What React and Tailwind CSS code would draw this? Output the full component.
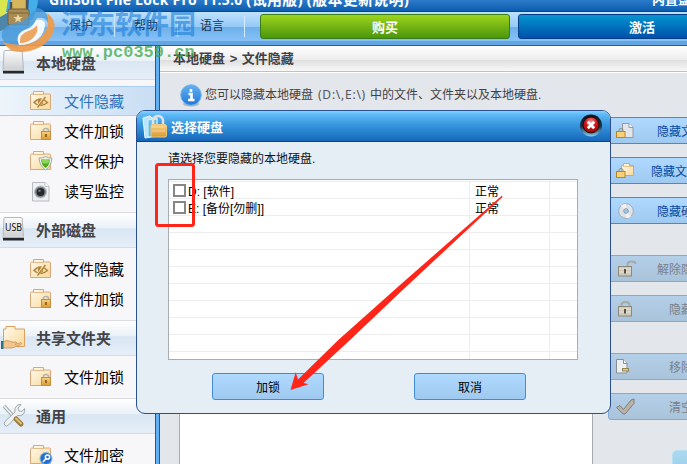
import React from "react";

const FOLDER = "M.5 4.500q0-1.500 1.500-1.500h1.500V.5h10V3h6q1 0 1 1V18.500H.5z";

function Defs() {
  return (
    <svg className="absolute h-0 w-0" aria-hidden="true">
      <defs>
        <linearGradient id="fold" x1="0" y1="0" x2="1" y2="1">
          <stop offset="0" stopColor="#fffaf0" />
          <stop offset="1" stopColor="#f8d995" />
        </linearGradient>
        <linearGradient id="lock" x1="0" y1="0" x2="0" y2="1">
          <stop offset="0" stopColor="#f9d083" />
          <stop offset="1" stopColor="#d99a35" />
        </linearGradient>
        <linearGradient id="silver" x1="0" y1="0" x2="0" y2="1">
          <stop offset="0" stopColor="#fcfcfc" />
          <stop offset="1" stopColor="#c9ccd0" />
        </linearGradient>
        <radialGradient id="red" cx=".5" cy=".3" r=".7">
          <stop offset="0" stopColor="#f39a9a" />
          <stop offset=".5" stopColor="#cf1717" />
          <stop offset="1" stopColor="#8d0505" />
        </radialGradient>
        <linearGradient id="ring" x1="0" y1="0" x2="0" y2="1">
          <stop offset="0" stopColor="#0c1118" />
          <stop offset=".55" stopColor="#1c344c" />
          <stop offset="1" stopColor="#86cdf5" />
        </linearGradient>
        <linearGradient id="info" x1="0" y1="0" x2="0" y2="1">
          <stop offset="0" stopColor="#66b0ee" />
          <stop offset="1" stopColor="#1d79dc" />
        </linearGradient>
      </defs>
    </svg>
  );
}

function Folder({ kind }) {
  return (
    <svg width="24" height="21" viewBox="0 0 24 21" className="shrink-0">
      <path d={FOLDER} fill="url(#fold)" stroke="#d9a87a" />
      <path d="M3 3.500h11" stroke="#e3b98c" />
      {kind === "eye" && (
        <g fill="none" stroke="#b18439" strokeWidth="1.500">
          <path d="M4 11.500q6.500-7 13.500 0q-7 6-13.500 0z" />
          <circle cx="10.500" cy="11" r="2" fill="#b18439" />
          <path d="M15 5.500L7 17" stroke="#fbe8bd" strokeWidth="2.500" />
          <path d="M15.500 6L7.500 16.500" />
        </g>
      )}
      {kind === "lock" && (
        <g>
          <path d="M13.500 12V9.500q0-2 2.500-2t2.500 2V12" fill="none" stroke="#b4b4ae" strokeWidth="1.600" />
          <rect x="11.500" y="10.500" width="9" height="8" fill="url(#lock)" stroke="#c58e38" />
          <path d="M16 13v3" stroke="#7d5312" strokeWidth="1.600" />
        </g>
      )}
      {kind === "shield" && (
        <g>
          <path d="M9 7q3.500.500 6.500-1.500q3 2 6.500 1.500q-.5 8-6.500 12q-6-4-6.500-12z" fill="#eef3ee" stroke="#9cac9c" />
          <path d="M11 8.500h9q-.5 6-4.500 8.500q-4-2.500-4.500-8.500z" fill="#4faa1a" />
          <path d="M11.500 9h8l-1 3q-3.500 1.500-6 0z" fill="#8ed55c" />
        </g>
      )}
      {kind === "key" && (
        <g>
          <circle cx="16" cy="13.500" r="6" fill="#286fca" stroke="#84b4e6" />
          <circle cx="17.500" cy="12" r="2.100" fill="none" stroke="#fff" strokeWidth="1.500" />
          <path d="M16 13.500l-3 3.500" stroke="#fff" strokeWidth="1.500" />
        </g>
      )}
    </svg>
  );
}

function Monitor() {
  return (
    <svg width="24" height="21" viewBox="0 0 24 21" className="shrink-0">
      <path d="M2.500 1.500h12.500l4 4V20h-16.500z" fill="#eef0f2" stroke="#b9bcc0" />
      <path d="M15 1.500v4h4" fill="#fff" stroke="#c3c6ca" />
      <circle cx="10.500" cy="11" r="6" fill="#80858a" stroke="#c0c4c8" />
      <circle cx="10.500" cy="11" r="4" fill="#25282c" />
      <circle cx="9.500" cy="9.800" r="1.300" fill="#71777d" />
    </svg>
  );
}

function SectionIcon({ kind }) {
  if (kind === "share")
    return (
      <svg width="26" height="26" viewBox="0 0 26 26" className="shrink-0">
        <path d="M2.500 5V4H5V1.500h9V4h9.500v17.500h-21z" fill="url(#fold)" stroke="#d9a060" />
        <path d="M1 17q5-3 10 0h4q2 1-1 2.500l6-2q2 1-1 2.500l-8 3H1z" fill="#f3c58c" stroke="#c8935a" strokeWidth=".8" />
        <path d="M0 16h2.500v8H0z" fill="#2e7184" />
      </svg>
    );
  if (kind === "tools")
    return (
      <svg width="26" height="26" viewBox="0 0 26 26" className="shrink-0">
        <path d="M3 3l11 12" stroke="#9fa5aa" strokeWidth="3.500" />
        <path d="M3 3l11 12" stroke="#eef0f2" strokeWidth="1.800" />
        <path d="M4 22.500q-2-2 0-4L14 9q-1-4 2-6.500q2-1.500 4-1l-3 3.500l1 3l3 .5l2.500-3q1 3-1 5.500q-2.500 2.500-6 1.500L7.500 22q-2 2-3.500.5z" fill="#eef1f4" stroke="#a2a8ae" />
        <path d="M15 16l5 5" stroke="#9c7839" strokeWidth="5" strokeLinecap="round" />
        <path d="M15 15.500l5 5" stroke="#dbc084" strokeWidth="2" strokeLinecap="round" />
      </svg>
    );
  return (
    <svg width="26" height="26" viewBox="0 0 26 26" className="shrink-0">
      <path d="M4 .5h16q1 0 1.200 1L22.500 20.500v1H2v-1L3 1.500q0-1 1-1z" fill="url(#silver)" stroke="#b4b7bb" />
      <path d="M2 20.500h21v3H2z" fill="#26282b" />
      <path d="M2 20h21" stroke="#dfe2e5" />
      {kind === "usb" && (
        <text x="12.500" y="13.500" textAnchor="middle" fontSize="10.500" fontFamily="Noto Sans, sans-serif" fill="#111" textLength="17" lengthAdjust="spacingAndGlyphs">USB</text>
      )}
    </svg>
  );
}

function SideIcon({ kind }) {
  return (
    <svg width="20" height="18" viewBox="0 0 20 18" className="overflow-visible">
      {kind === "file" && (
        <g>
          <path d="M6.500 1.500h6.500l4 4v10H6.500z" fill="#e2e5e9" stroke="#939aa2" />
          <path d="M13 1.500v4h4" fill="#fff" stroke="#939aa2" />
        </g>
      )}
      {kind === "folder" && (
        <g>
          <path d="M5.500 13.500V3.500h2v-2h6v2h4v10z" fill="url(#fold)" stroke="#dca55c" />
          <path d="M7 4.500h10" stroke="#dca55c" strokeOpacity=".6" />
        </g>
      )}
      {(kind === "file" || kind === "folder") && (
        <g>
          <path d="M3 10V8q0-1.500 2-1.500T7 8v2" fill="none" stroke="#929080" />
          <rect x=".5" y="9.500" width="8.500" height="6" fill="#f8d177" stroke="#bb8426" />
        </g>
      )}
      {kind === "disc" && (
        <g>
          <circle cx="10" cy="9" r="7.300" fill="#e0e3e7" stroke="#a4adb6" />
          <path d="M10 9L5 3.500A7 7 0 0 1 10 2zM10 9l5 5.500A7 7 0 0 1 10 16z" fill="#f0f2f4" />
          <circle cx="10" cy="9" r="2.300" fill="#9ccbed" stroke="#8e9aa5" />
        </g>
      )}
      {(kind === "unlock" || kind === "lock") && (
        <g>
          <path d={kind === "lock" ? "M5.500 7V4.500q0-2.500 4-2.500t4 2.500V7" : "M11.500 7V4q0-2.500 4-2.500t4 2.500"} fill="none" stroke="#a5a9a8" strokeWidth="1.800" />
          <rect x="2.500" y="6.500" width="13" height="9.500" fill="#cfc9b9" stroke="#8f8877" />
          <path d="M3 9h12M3 12h12" stroke="#f0eee6" strokeWidth=".8" />
          <path d="M9 9v4.500" stroke="#565043" strokeWidth="2" />
        </g>
      )}
      {kind === "remove" && (
        <g>
          <path d="M.5 1.500h7l3.500 4v9.500H.5z" fill="#edf0f3" stroke="#8b8d8e" />
          <path d="M7.500 1.500v4H11" fill="#fff" stroke="#8b8d8e" />
          <rect x="6.500" y="10.500" width="6" height="2.500" fill="#d9cc9a" stroke="#938556" />
        </g>
      )}
      {kind === "check" && <path d="M.5 9.500l3.500-2l3.500 4L15 2l3-1v4.500L9 16H7z" fill="#b7b1a8" stroke="#847e76" />}
    </svg>
  );
}

const SECTIONS = [
  { title: "本地硬盘", icon: "disk", items: [["文件隐藏", "eye", true], ["文件加锁", "lock"], ["文件保护", "shield"], ["读写监控", "monitor"]] },
  { title: "外部磁盘", icon: "usb", items: [["文件隐藏", "eye"], ["文件加锁", "lock"]] },
  { title: "共享文件夹", icon: "share", items: [["文件加锁", "lock"]] },
  { title: "通用", icon: "tools", items: [["文件加密", "key"]] },
];

const ACTIONS = [
  ["隐藏文件", "file", "mt-0"],
  ["隐藏文件夹", "folder", "mt-[13px]"],
  ["隐藏硬盘", "disc", "mt-[13px]"],
  ["解除隐藏", "unlock", "mt-[31px]", true],
  ["隐藏", "lock", "mt-[13px]", true],
  ["移除", "remove", "mt-[31px]", true],
  ["清空", "check", "mt-[13px]", true],
];

function Sidebar() {
  return (
    <aside className="w-[155px] shrink-0 bg-[#f7f7f9]">
      {SECTIONS.map((s, i) => (
        <section key={s.title}>
          <header className={"flex items-center border-b border-[#d5dce4] bg-[linear-gradient(#ffffff,#eaf1f8_44%,#d9e6f3_46%,#e6eff8)] pl-px " + (i === 0 ? "h-[34px]" : "h-9 border-t border-t-[#dcdcdf]")}>
            <SectionIcon kind={s.icon} />
            <span className="ml-[9px] pt-0.5 text-[15px] leading-5 font-bold text-[#434347]">{s.title}</span>
          </header>
          <div className="py-1.5">
            {s.items.map(([label, icon, active]) => (
              <div key={label} className={"flex h-[30px] items-center pl-[30px] " + (active ? "border-y border-[#a9d0f3] bg-[linear-gradient(90deg,#eef5fc,#c8def4)]" : "")}>
                {icon === "monitor" ? <Monitor /> : <Folder kind={icon} />}
                <span className={"ml-[10px] pt-0.5 text-[15px] leading-5 " + (active ? "text-[#2a72be]" : "text-black")}>{label}</span>
              </div>
            ))}
          </div>
        </section>
      ))}
    </aside>
  );
}

function DialogButton({ children }) {
  return (
    <button className="h-[27px] w-28 rounded-[3px] border border-[#408dd6] bg-linear-to-b from-[#afd9ff] to-[#9fc9ee] pt-0.5 text-xs text-black">{children}</button>
  );
}

function Dialog() {
  const rows = [["D: [软件]", "正常"], ["E: [备份[勿删]]", "正常"], ["", ""], ["", ""], ["", ""], ["", ""], ["", ""], ["", ""], ["", ""], ["", ""], ["", ""]];
  return (
    <div className="absolute top-[110px] left-[136px] flex h-[304px] w-[475px] flex-col overflow-hidden rounded-[9px] border border-[#2b4f8d] bg-[#e5edf5]">
      <div className="flex h-[31px] shrink-0 items-center border-b border-[#124180] bg-[linear-gradient(#84d2ff,#5db9f6_12%,#3898df_45%,#1667b9)] pl-[5px]">
        <svg width="26" height="25" viewBox="0 0 26 25">
          <path d="M1 4l7-2l2 2h5v18l-12 2z" fill="#b9e4fc" stroke="#e9f8ff" />
          <path d="M6 6l9-1v17l-9 1z" fill="#64bce9" stroke="#d2f1fe" />
          <path d="M11 12V6q1-4 5-4t5 4v6" fill="none" stroke="#e1e2df" strokeWidth="2.500" />
          <rect x="9" y="10.500" width="15.500" height="12.500" rx="1.500" fill="url(#lock)" stroke="#edc57b" />
          <path d="M10 13h13M10 17h13" stroke="#ffe9b5" strokeOpacity=".6" />
        </svg>
        <span className="ml-[3px] grow pt-[3px] text-[13px] leading-5 font-bold text-white">选择硬盘</span>
        <svg width="24" height="26" viewBox="0 0 24 26" className="mr-[7px]">
          <circle cx="12" cy="12.500" r="11" fill="url(#ring)" />
          <circle cx="12" cy="12" r="8" fill="url(#red)" stroke="#2b0808" />
          <path d="M8.800 8.800l6.400 6.400M15.200 8.800l-6.400 6.400" stroke="#fff" strokeWidth="2.800" />
        </svg>
      </div>
      <p className="mt-[7px] ml-[31px] text-xs leading-5 text-[#111]">请选择您要隐藏的本地硬盘.</p>
      <div className="mt-[10px] ml-[31px] h-[181px] w-[410px] shrink-0 overflow-hidden border border-[#a9adb2] bg-white pt-px">
        {rows.map(([name, state], i) => (
          <div key={i} className="flex h-[17px] border-t border-[#ededee] text-xs leading-4 text-black">
            <div className="flex w-[301px] items-center border-r border-[#ededee] pl-1">
              {name && <span className="mr-0.5 size-[13px] border-2 border-[#868686] bg-white" />}
              <span className="mt-[3px]">{name}</span>
            </div>
            <div className="w-20 border-r border-[#ededee] pt-0.5 pl-[5px]">{state}</div>
          </div>
        ))}
      </div>
      <div className="mt-[13px] flex gap-[90px] pl-[75px]">
        <DialogButton>加锁</DialogButton>
        <DialogButton>取消</DialogButton>
      </div>
    </div>
  );
}

function Watermark() {
  return (
    <div className="pointer-events-none absolute top-0 left-0 h-[66px] w-[200px]">
      <svg width="60" height="56" viewBox="0 0 60 56" className="absolute top-0 left-0">
        <path d="M0 0h9L6 14L0 17z" fill="#d8e64f" />
        <path d="M8 0h5l-2 12H6z" fill="#40a9e6" />
        <path d="M29 0h9q-1 12-6 20h-5z" fill="#43aee8" />
        <path d="M0 17l9-5v16l-9 3z" fill="#4d86a8" />
        <path d="M11 0h16v9H11z" fill="#d6b55c" />
        <path d="M11 10V2M27 10V0" stroke="#4d5855" strokeWidth="2.500" />
        <rect x="8" y="9" width="21" height="16" rx="2" fill="#a98c55" stroke="#6d623f" />
        <path d="M9 13h19" stroke="#7d6435" />
        <path d="M18 14l1.300 3h3.500l-2.800 2l1 3.500l-3-2l-3 2l1-3.500l-2.800-2h3.500z" fill="#ead8a0" />
        <path d="M2 38Q0 26 15 23q9-1 13-6q3-5 10-9q12 4 10 15q-2-6-11-5q-3 8-11 11q-9 4-8 20Q6 48 2 38z" fill="#4a9ad8" fillOpacity=".8" />
        <path d="M3 42q6 11 20 10q22-2 30-19q5-12-6-20q4 14-5 23Q28 50 3 42z" fill="#ef9a48" fillOpacity=".92" />
        <path d="M19 45q-5-12 8-16q6-2 9-9q7-1 9 3q0 10-7 16q-8 6-19 6z" fill="#fff" fillOpacity=".9" />
        <path d="M20 43q-1-9 8-12q6-2 9-6q2 7-4 13q-5 5-13 5z" fill="#eda763" />
      </svg>
      <div className="absolute top-[9px] left-[61px] text-[27px] leading-8 font-bold whitespace-nowrap text-[#1c7ed6]/60">河东软件园</div>
      <div className="absolute top-[42px] left-[62px] font-['Liberation_Mono',monospace] text-[17px] leading-[22px] font-bold whitespace-nowrap text-[#3da64a]/75">www.pc0359.cn</div>
    </div>
  );
}

export default function App() {
  return (
    <div className="relative flex h-[464px] w-[687px] flex-col overflow-hidden bg-[#e3e6ea] font-['Liberation_Sans','Noto_Sans_CJK_SC',sans-serif]">
      <Defs />
      <div className="flex h-[11px] shrink-0 items-end justify-between overflow-hidden bg-linear-to-b from-[#2a7bc9] to-[#0c5cae] text-white">
        <span className="-mb-px pl-[49px] font-['Open_Sans','Noto_Sans_CJK_SC',sans-serif] text-[15px] leading-6 font-bold tracking-[0.25px] whitespace-nowrap"><span className="text-[14px]">GiliSoft File Lock Pro 11.5.0 </span>(试用版) (版本更新说明)</span>
        <span className="-mr-[17px] -mb-px text-[13px] leading-6 font-bold whitespace-nowrap">内置盘菜</span>
      </div>
      <nav className="flex h-[30px] shrink-0 border-t border-[#15447c] bg-[linear-gradient(#bfe1fd,#95caf7_50%,#6eb0ed_52%,#86c2f7)] text-xs leading-[29px] text-[#17324e]">
        <div className="w-[114px] shrink-0 pl-[69px]">保护</div>
        <div className="my-1 w-px shrink-0 bg-[#c9e7ff]" />
        <div className="w-[62px] shrink-0 pl-[19px]">帮助</div>
        <div className="my-1 w-px shrink-0 bg-[#c9e7ff]" />
        <div className="w-[66px] shrink-0 pl-[22px]">语言</div>
        <div className="my-1 w-px shrink-0 bg-[#d5edff]" />
        <button className="mt-0.5 ml-[15px] h-[25px] w-[250px] shrink-0 rounded-[3px] border border-[#397d19] bg-linear-to-b from-[#9dd51c] to-[#4a960c] pt-[3px] text-[13px] leading-5 font-bold text-white">购买</button>
        <button className="mt-0.5 ml-2 h-[25px] w-[248px] shrink-0 rounded-[3px] border border-[#063e86] bg-linear-to-b from-[#0695d0] to-[#0350ab] pt-[3px] text-[13px] leading-5 font-bold text-white">激活</button>
      </nav>
      <div className="h-[5px] shrink-0 border-b border-[#1c62a8] bg-[#62a5e2]" />
      <div className="flex min-h-0 grow">
        <Sidebar />
        <div className="w-[5px] shrink-0 border-x border-[#1b5c9d] bg-[#5fb0f5]" />
        <main className="flex w-[594px] shrink-0 flex-col">
          <div className="h-[26px] shrink-0 border-b border-[#bfc1c4] bg-[linear-gradient(#ffffff,#ededed_55%,#dfdfdf_57%,#f8f8f8)] pl-[13px] text-[13px] leading-[26px] font-bold text-[#414145]">本地硬盘 <span className="ml-px">&gt;</span> <span className="ml-px">文件隐藏</span></div>
          <div className="flex h-[45px] shrink-0 items-center border-t border-white pl-5">
            <svg width="22" height="23" viewBox="0 0 22 23" className="shrink-0">
              <ellipse cx="11" cy="20" rx="8" ry="2.500" fill="#aeb7c2" />
              <circle cx="11" cy="11" r="10.300" fill="url(#info)" stroke="#77b5e8" />
              <path d="M11 5v3M8.500 10h3v6M8 16h6.500" stroke="#fff" strokeWidth="2.600" fill="none" />
            </svg>
            <p className="ml-[3px] text-xs leading-5 whitespace-nowrap text-[#424246]">您可以隐藏本地硬盘<span className="mr-1 ml-[5px] font-['Noto_Sans',sans-serif] text-[12px] tracking-[0.75px] text-[#525461]">(D:\,E:\)</span>中的文件、文件夹以及本地硬盘.</p>
          </div>
          <div className="flex min-h-0 grow">
            <div className="ml-[19px] w-[414px] shrink-0 border border-b-0 border-[#a7aaae] bg-white" />
            <div className="ml-[15px] w-[146px] shrink-0">
              {ACTIONS.map(([label, icon, gap, off]) => (
                <div key={label} className={"grid h-[27px] items-center rounded-[3px] border bg-linear-to-b text-xs " + gap + (off ? " border-[#7fabd5] from-[#b4d0e8] to-[#a8c3da] text-[#7b8086]" : " border-[#408dd6] from-[#afd9ff] to-[#9fc9ee] text-[#0748a0]")}>
                  <span className="[grid-area:1/1] pl-[7px]"><SideIcon kind={icon} /></span>
                  <span className="pt-0.5 text-center [grid-area:1/1]">{label}</span>
                </div>
              ))}
              <div className="mt-[30px] ml-16 h-10 w-[90px] rounded-[5px] border border-[#b7dff4] bg-linear-to-b from-[#acd9ef] to-[#8ac4e8]" />
            </div>
          </div>
        </main>
      </div>
      <Dialog />
      <svg width="687" height="464" viewBox="0 0 687 464" className="pointer-events-none absolute inset-0">
        <rect x="156.500" y="164.500" width="37" height="61" rx="2" fill="none" stroke="#ff2518" strokeWidth="3" />
        <path d="M290.500 390L295.700 372.300L298 379.500L338.300 340L400 285L502 195.500L502.500 197L400 292.500L350 340L303.500 383L308.500 384.300z" fill="#ff2518" />
      </svg>
      <Watermark />
    </div>
  );
}
